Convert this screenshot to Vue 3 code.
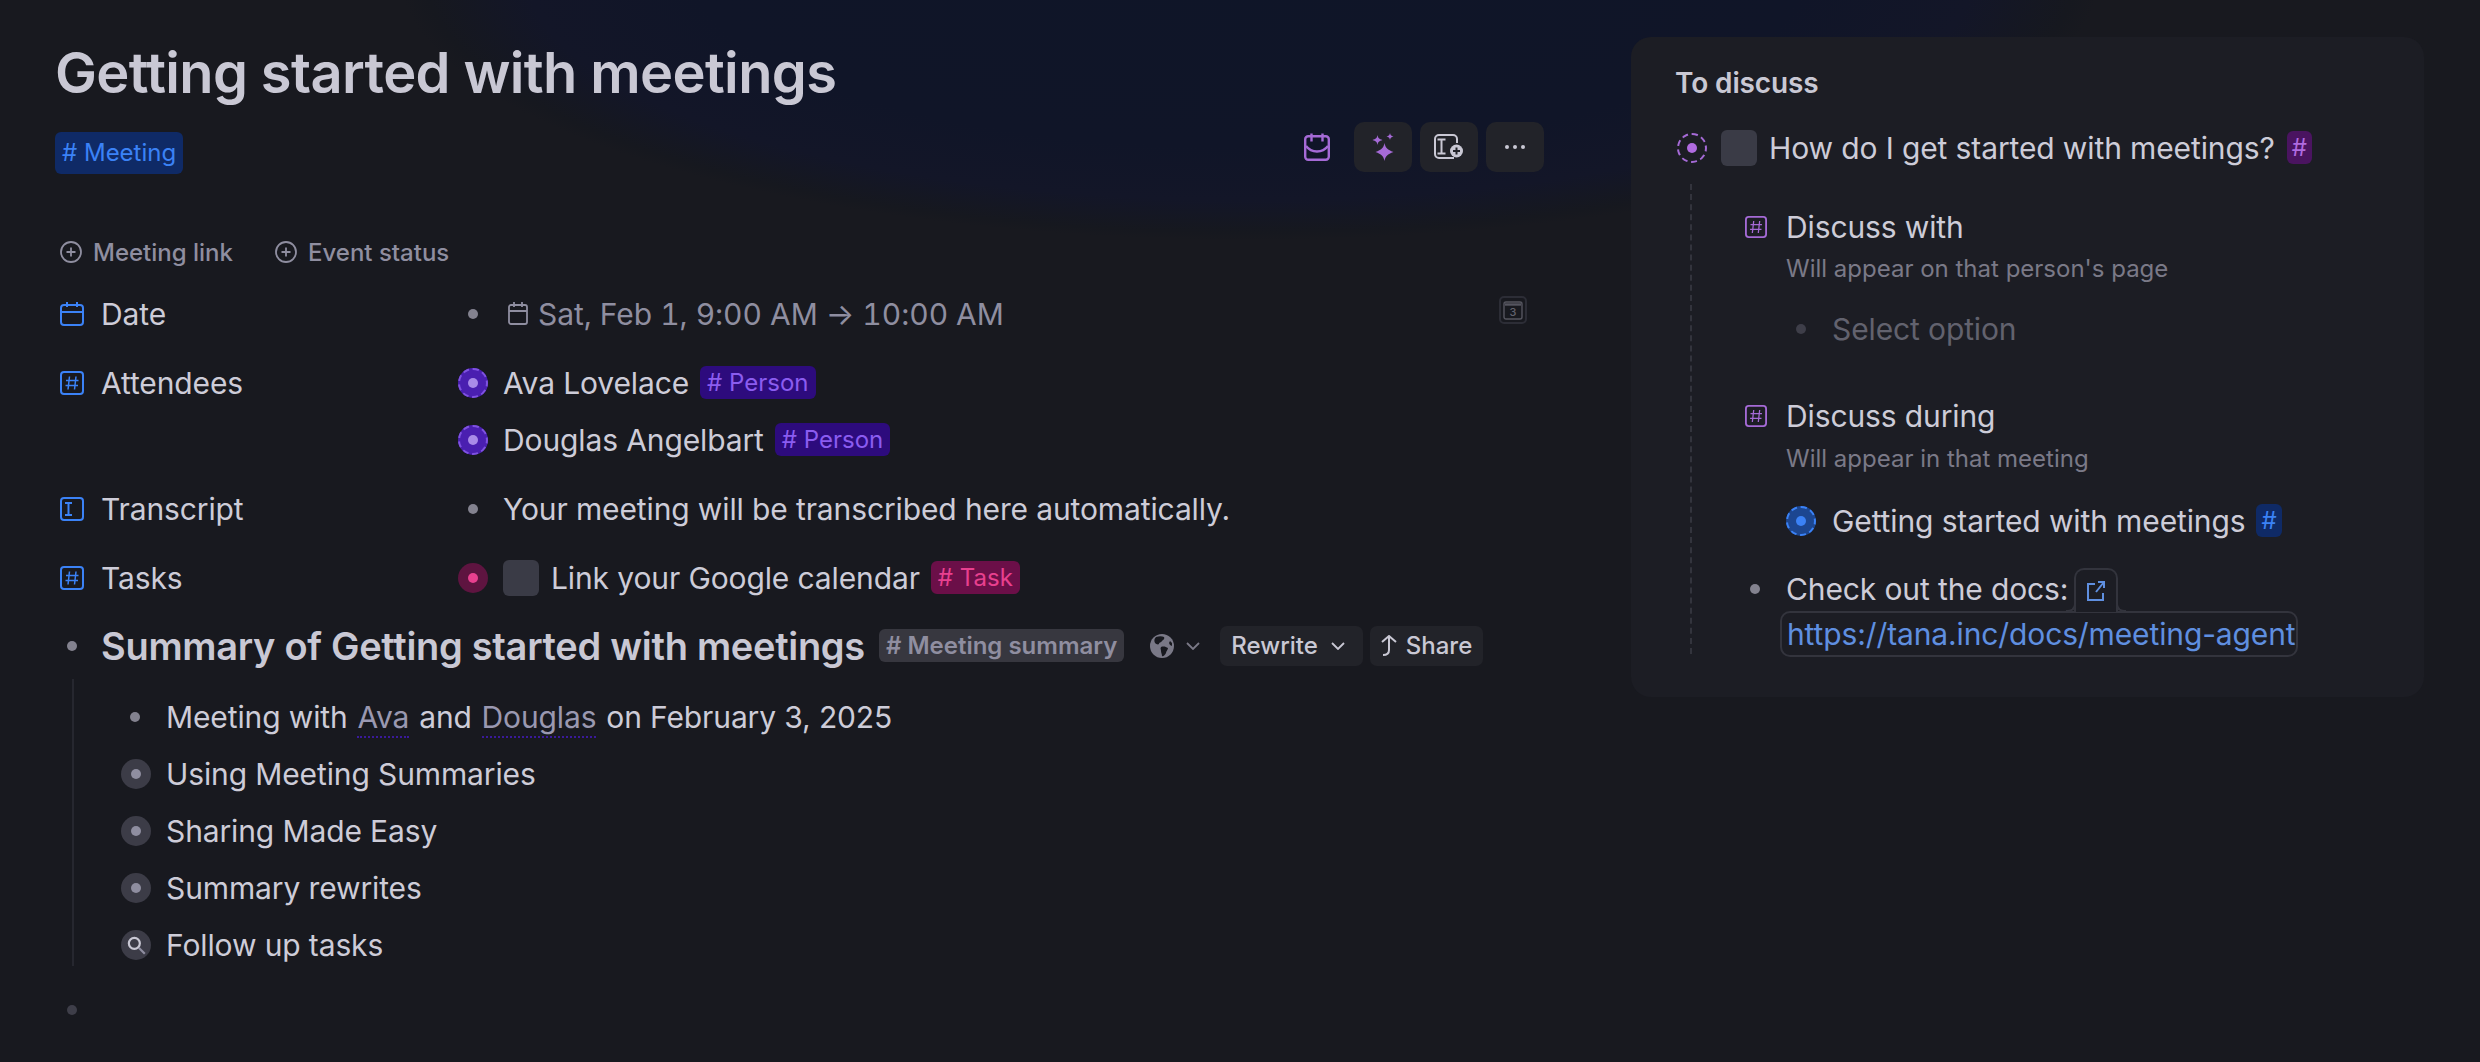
<script setup>
const summaryItems = [
  { text: 'Using Meeting Summaries', search: false },
  { text: 'Sharing Made Easy', search: false },
  { text: 'Summary rewrites', search: false },
  { text: 'Follow up tasks', search: true },
]
</script>

<template>
  <div class="page">
    <div class="glow"></div>

    <main class="main">
      <h1 class="title">Getting started with meetings</h1>

      <div class="tagbar">
        <span class="tag tag-blue tag-meeting"># Meeting</span>
        <div class="actions">
          <svg class="cal-face" viewBox="0 0 26 28" fill="none" stroke="#a56ad6" stroke-width="2.4">
            <rect x="1.2" y="3.2" width="23.6" height="23.6" rx="3" />
            <path d="M7.5 .5v8M18.5 .5v8M2 13c3 4 7 5.500 11 5.500s8-1.500 11-5.500" />
          </svg>
          <button class="act">
            <svg width="22" height="28" viewBox="0 0 22 28" fill="#a56ad6">
              <path d="M12.500 10c1 5 3 6.800 9 9-6 2.200-8 4-9 9-1-5-3-6.800-9-9 6-2.200 8-4 9-9z" />
              <path d="M5.500 2c.5 3 1.700 4 5 5-3.300 1-4.500 2-5 5-.5-3-1.700-4-5-5 3.300-1 4.500-2 5-5z" />
              <path d="M18 0c.3 2 1.100 2.700 3.500 3.500-2.400.8-3.200 1.500-3.500 3.500-.3-2-1.100-2.700-3.500-3.500 2.400-.8 3.200-1.500 3.500-3.500z" />
            </svg>
          </button>
          <button class="act">
            <svg width="30" height="26" viewBox="0 0 30 26" fill="none" stroke="#c9c8d4" stroke-width="2">
              <path d="M20 24H5a4 4 0 0 1-4-4V5a4 4 0 0 1 4-4h14a4 4 0 0 1 4 4v4" />
              <path d="M3.500 5.500h8M3.500 19.500h8M7.500 5.500v14" />
              <circle cx="22.500" cy="17" r="6.500" fill="#c9c8d4" stroke="none" />
              <path d="M22.500 13.500v7M19 17h7" stroke="#222329" />
            </svg>
          </button>
          <button class="act">
            <span class="dots"><i></i><i></i><i></i></span>
          </button>
        </div>
      </div>

      <div class="addrow">
        <span class="add">
          <svg width="22" height="22" viewBox="0 0 22 22" fill="none" stroke="#8f8ea0" stroke-width="1.800"><circle cx="11" cy="11" r="10" /><path d="M11 6.500v9M6.500 11h9" /></svg>
          Meeting link
        </span>
        <span class="add">
          <svg width="22" height="22" viewBox="0 0 22 22" fill="none" stroke="#8f8ea0" stroke-width="1.800"><circle cx="11" cy="11" r="10" /><path d="M11 6.500v9M6.500 11h9" /></svg>
          Event status
        </span>
      </div>

      <div class="fields">
        <div class="field">
          <div class="label">
            <svg class="ficon" viewBox="0 0 24 24" fill="none" stroke="#3b82f6" stroke-width="2"><rect x="1" y="3" width="22" height="20" rx="3" /><path d="M1 10h22M7 0v5M17 0v5" /></svg>
            <span>Date</span>
          </div>
          <div class="values">
            <div class="line muted">
              <span class="bullet-slot"><i class="dot"></i></span>
              <svg class="cal-small" viewBox="0 0 20 24" fill="none" stroke="#8f8ea0" stroke-width="1.800"><rect x="1" y="3" width="18" height="19" rx="2" /><path d="M1 9h18M6 0v5M14 0v5" /></svg>
              <span class="when">Sat, Feb 1, 9:00 AM → 10:00 AM</span>
              <span class="today">
                <svg width="20" height="20" viewBox="0 0 20 20" fill="none" stroke="#55555f" stroke-width="1.400"><rect x="1" y="2" width="18" height="17" rx="2" /><path d="M2 4.500h16" stroke-width="2.400" /></svg>
                <b>3</b>
              </span>
            </div>
          </div>
        </div>

        <div class="field">
          <div class="label">
            <svg class="ficon" viewBox="0 0 24 24" fill="none" stroke="#3b82f6" stroke-width="2"><rect x="1" y="1" width="22" height="22" rx="3" /><path d="M9.500 5.500 8 18.500M16 5.500l-1.500 13M6 9.500h12.500M5.500 14.500H18" stroke-width="1.500" /></svg>
            <span>Attendees</span>
          </div>
          <div class="values">
            <div class="line">
              <span class="bullet-slot"><i class="avatar a-violet"></i></span>
              <span>Ava Lovelace</span>
              <span class="tag tag-violet"># Person</span>
            </div>
            <div class="line">
              <span class="bullet-slot"><i class="avatar a-violet"></i></span>
              <span>Douglas Angelbart</span>
              <span class="tag tag-violet"># Person</span>
            </div>
          </div>
        </div>

        <div class="field">
          <div class="label">
            <svg class="ficon" viewBox="0 0 24 24" fill="none" stroke="#3b82f6" stroke-width="2"><rect x="1" y="1" width="22" height="22" rx="3" /><path d="M5 6h7M5 18h7M8.500 6v12" /></svg>
            <span>Transcript</span>
          </div>
          <div class="values">
            <div class="line">
              <span class="bullet-slot"><i class="dot"></i></span>
              <span>Your meeting will be transcribed here automatically.</span>
            </div>
          </div>
        </div>

        <div class="field">
          <div class="label">
            <svg class="ficon" viewBox="0 0 24 24" fill="none" stroke="#3b82f6" stroke-width="2"><rect x="1" y="1" width="22" height="22" rx="3" /><path d="M9.500 5.500 8 18.500M16 5.500l-1.500 13M6 9.500h12.500M5.500 14.500H18" stroke-width="1.500" /></svg>
            <span>Tasks</span>
          </div>
          <div class="values">
            <div class="line">
              <span class="bullet-slot"><i class="avatar a-pink"></i></span>
              <i class="check"></i>
              <span>Link your Google calendar</span>
              <span class="tag tag-pink"># Task</span>
            </div>
          </div>
        </div>
      </div>

      <div class="summary-head">
        <span class="outer-slot"><i class="dot"></i></span>
        <strong class="summary-title">Summary of Getting started with meetings</strong>
        <span class="tag tag-gray"># Meeting summary</span>
        <svg class="globe" viewBox="0 0 24 24">
          <circle cx="12" cy="12" r="12" fill="#7a7987" />
          <path d="M6 3c3-1 6-1 8 0 1 2-1 3-2 4-1 2-3 1-3 3-1 1-3 0-4-1C4 7 4 5 6 3zM11 13c3-1 5 0 7 1 0 2-2 3-2 5-1 2-3 4-4 3 0-2-1-3-1-5s-1-2 0-4zM20 7l2 2v3l-2-1-1-2z" fill="#18191f" />
        </svg>
        <svg class="chev globe-chev" viewBox="0 0 14 8" fill="none" stroke="#7a7987" stroke-width="1.800"><path d="M1 1l6 6 6-6" /></svg>
        <button class="pill rewrite">
          Rewrite
          <svg class="chev" viewBox="0 0 14 8" fill="none" stroke="#c9c8d4" stroke-width="1.800"><path d="M1 1l6 6 6-6" /></svg>
        </button>
        <button class="pill share">
          <svg width="16" height="22" viewBox="0 0 16 22" fill="none" stroke="#c9c8d4" stroke-width="2"><path d="M1 7l7-6 7 6M8 1v14c0 3-2 5-6 5" /></svg>
          Share
        </button>
      </div>

      <div class="summary-body">
        <div class="sline">
          <span class="sslot"><i class="dot"></i></span>
          <span>Meeting with <a class="mention">Ava</a> and <a class="mention">Douglas</a> on February 3, 2025</span>
        </div>
        <div v-for="item in summaryItems" :key="item.text" class="sline">
          <span class="sslot">
            <i class="avatar a-gray">
              <svg v-if="item.search" width="22" height="22" viewBox="0 0 20 20" fill="none" stroke="#c9c8d4" stroke-width="2"><circle cx="8.500" cy="8.500" r="5" /><path d="M12.500 12.500 18 18" stroke="#8f8ea0" /></svg>
            </i>
          </span>
          <span>{{ item.text }}</span>
        </div>
      </div>

      <div class="empty-row"><span class="outer-slot"><i class="dot dot-dim"></i></span></div>
    </main>

    <aside class="panel">
      <h2 class="panel-title">To discuss</h2>
      <div class="q-row">
        <i class="avatar a-ring"></i>
        <i class="check"></i>
        <span>How do I get started with meetings?</span>
        <span class="tag tag-plum">#</span>
      </div>
      <div class="q-body">
        <div class="p-field">
          <div class="p-head">
            <svg class="picon" viewBox="0 0 24 24" fill="none" stroke="#a56ad6" stroke-width="2"><rect x="1" y="1" width="22" height="22" rx="3" /><path d="M9.500 5.500 8 18.500M16 5.500l-1.500 13M6 9.500h12.500M5.500 14.500H18" stroke-width="1.400" /></svg>
            <span>Discuss with</span>
          </div>
          <p class="hint">Will appear on that person's page</p>
          <div class="p-val placeholder"><span class="pslot"><i class="dot dot-dim"></i></span><span>Select option</span></div>
        </div>
        <div class="p-field second">
          <div class="p-head">
            <svg class="picon" viewBox="0 0 24 24" fill="none" stroke="#a56ad6" stroke-width="2"><rect x="1" y="1" width="22" height="22" rx="3" /><path d="M9.500 5.500 8 18.500M16 5.500l-1.500 13M6 9.500h12.500M5.500 14.500H18" stroke-width="1.400" /></svg>
            <span>Discuss during</span>
          </div>
          <p class="hint">Will appear in that meeting</p>
          <div class="p-val during"><span class="pslot"><i class="avatar a-blue"></i></span><span>Getting started with meetings</span><span class="tag tag-blue tag-hash">#</span></div>
        </div>
        <div class="docs">
          <div class="docs-top">
            <span class="docs-dot"><i class="dot"></i></span>
            <span>Check out the docs:</span>
            <span class="ext">
              <svg width="20" height="22" viewBox="0 0 20 22" fill="none" stroke="#5f8fe0" stroke-width="2"><path d="M9 4H2v16h15v-7M10 12 18 2M12 2h6v6" /></svg>
            </span>
          </div>
          <div class="url">https://tana.inc/docs/meeting-agent</div>
        </div>
      </div>
    </aside>
  </div>
</template>

<style>
html, body { margin: 0; background: #18191f; }
</style>

<style scoped>
.page {
  position: relative;
  width: 2480px;
  height: 1062px;
  overflow: hidden;
  display: flex;
  background: #18191f;
  color: #cdccd8;
  font-family: Inter, "Noto Sans", sans-serif;
  font-size: 30px;
  letter-spacing: -0.12px;
}
.glow {
  position: absolute;
  left: 400px;
  top: -290px;
  width: 1700px;
  height: 530px;
  border-radius: 50%;
  background: radial-gradient(closest-side, #0f1528 0%, #101528 65%, #131628 85%, #16181f 97%, #18191f 100%);
}
.main {
  position: relative;
  width: 1544px;
  padding-left: 56px;
  box-sizing: content-box;
  flex: none;
}
.title {
  margin: 0 0 0 -1px;
  padding-top: 37px;
  height: 72px;
  line-height: 72px;
  font-size: 56px;
  font-weight: 600;
  letter-spacing: -0.63px;
  color: #c9c8d4;
}
.tagbar {
  margin-top: 13px;
  height: 50px;
  display: flex;
  align-items: center;
  justify-content: space-between;
  width: 1488px;
}
.tag {
  display: inline-flex;
  align-items: center;
  height: 33px;
  padding: 0 7px;
  border-radius: 6px;
  font-size: 24px;
  line-height: 33px;
  letter-spacing: 0;
  white-space: nowrap;
}
.tag-meeting { height: 42px; margin-top: 11px; margin-left: -1px; }
.tag-blue { background: #0f2a66; color: #3b82f6; }
.tag-violet { background: #2d0b7d; color: #8b5cf0; margin-left: 11px; }
.tag-pink { background: #6b0f48; color: #e8408f; margin-left: 11px; }
.tag-gray { background: #37373f; color: #8f8ea0; font-weight: 600; margin-left: 14px; padding: 0 7px; }
.tag-plum { background: #4a1460; color: #b06be0; margin-left: 12px; padding: 0 5px; }
.tag-hash { padding: 0 5px; margin-left: 11px; }
.actions { display: flex; align-items: center; gap: 8px; }
.cal-face { width: 26px; height: 28px; margin-right: 16px; }
.act {
  width: 58px;
  height: 50px;
  padding: 0;
  border: 0;
  border-radius: 10px;
  background: #222329;
  display: flex;
  align-items: center;
  justify-content: center;
}
.dots { display: flex; gap: 4px; }
.dots i { width: 4px; height: 4px; border-radius: 50%; background: #c9c8d4; }
.addrow {
  margin-top: 62px;
  height: 36px;
  display: flex;
  align-items: center;
  gap: 42px;
  padding-left: 4px;
  color: #8f8ea0;
  font-size: 24px;
  font-weight: 500;
  letter-spacing: 0;
}
.add { display: flex; align-items: center; gap: 11px; }
.fields { margin-top: 15px; display: flex; flex-direction: column; gap: 12px; }
.field { display: flex; }
.label {
  width: 398px;
  height: 57px;
  flex: none;
  display: flex;
  align-items: center;
  gap: 17px;
  padding-left: 4px;
  box-sizing: content-box;
}
.ficon { width: 24px; height: 24px; flex: none; }
.values { display: flex; flex-direction: column; flex: 1; }
.line { height: 57px; display: flex; align-items: center; white-space: nowrap; position: relative; }
.muted { color: #8f8ea0; }
.when { font-variant-numeric: tabular-nums; letter-spacing: -0.03px; }
.bullet-slot { width: 45px; display: flex; justify-content: center; padding-right: 15px; box-sizing: border-box; flex: none; }
.dot { display: block; width: 10px; height: 10px; border-radius: 50%; background: #83828f; }
.dot-dim { background: #3e3e49; }
.avatar { display: flex; align-items: center; justify-content: center; position: relative; width: 30px; height: 30px; border-radius: 50%; flex: none; }
.avatar::after { content: ""; width: 10px; height: 10px; border-radius: 50%; background: currentColor; }
.a-violet { background: #4a1fb0; color: #a98be8; outline: 2px dashed #7f52e0; outline-offset: -2px; }
.a-pink { background: #5e1440; color: #e8408f; }
.a-gray { background: #3c3c47; color: #8f8ea0; }
.a-gray:has(svg)::after { display: none; }
.a-ring { border: 2px dashed #a56ad6; box-sizing: border-box; color: #b06be0; }
.a-blue { background: #1c4690; color: #3b82f6; outline: 2px dashed #3b82f6; outline-offset: -2px; }
.check { display: block; width: 36px; height: 36px; border-radius: 6px; background: #3a3b46; flex: none; margin-right: 12px; }
.cal-small { width: 20px; height: 24px; margin: 0 10px 0 5px; flex: none; }
.today {
  position: absolute;
  left: 1041px;
  top: 11px;
  width: 28px;
  height: 28px;
  border: 2px solid #2c2d36;
  border-radius: 5px;
  box-sizing: border-box;
  display: flex;
  align-items: center;
  justify-content: center;
}
.today svg { position: absolute; left: 2px; top: 2px; }
.today b { font-size: 11px; font-weight: 500; color: #62626e; position: relative; top: 2px; }
.summary-head { margin-top: 11px; height: 57px; display: flex; align-items: center; white-space: nowrap; }
.outer-slot { width: 46px; margin-left: -1px; padding-left: 12px; box-sizing: border-box; flex: none; display: flex; }
.summary-title { font-size: 38px; font-weight: 600; color: #c9c8d4; letter-spacing: -0.3px; }
.globe { width: 24px; height: 24px; margin-left: 26px; flex: none; }
.globe-chev { margin-left: 12px; }
.chev { width: 14px; height: 8px; flex: none; }
.pill {
  height: 40px;
  border: 0;
  padding: 0 11px;
  border-radius: 7px;
  background: #222329;
  color: #c9c8d4;
  font: 500 24px Inter, sans-serif;
  display: flex;
  align-items: center;
}
.rewrite { margin-left: 20px; gap: 13px; padding-right: 18px; }
.share { margin-left: 7px; gap: 9px; }
.summary-body {
  margin: 5px 0 6px 16px;
  padding: 9px 0 0 48px;
  height: 287px;
  box-sizing: border-box;
  border-left: 2px solid #26272f;
  display: flex;
  flex-direction: column;
}
.sline { height: 57px; flex: none; display: flex; align-items: center; white-space: nowrap; }
.sslot { width: 45px; margin-left: -1px; display: flex; justify-content: flex-start; flex: none; }
.sslot .dot { margin-left: 9px; }
.mention { color: #9a98b0; border-bottom: 2px dotted #3a1a9a; padding-bottom: 1px; margin: 0 1.500px; }
.empty-row { margin-top: 15px; height: 57px; display: flex; align-items: center; }
.panel {
  position: relative;
  margin: 37px 0 0 31px;
  width: 793px;
  height: 660px;
  padding: 28px 44px 0;
  box-sizing: border-box;
  border-radius: 20px;
  background: #1c1d24;
  flex: none;
}
.panel-title { margin: 0; height: 36px; line-height: 36px; font-size: 28px; font-weight: 600; color: #c9c8d4; }
.q-row { margin-top: 18px; height: 57px; display: flex; align-items: center; white-space: nowrap; margin-left: 2px; }
.q-row .check { margin: 0 12px 0 14px; }
.q-body {
  margin-left: 15px;
  margin-top: 8px;
  padding-left: 53px;
  height: 470px;
  border-left: 2px dashed #33343d;
  display: flex;
  flex-direction: column;
}
.p-field { padding-top: 20px; }
.second { padding-top: 36px; }
.p-head { display: flex; align-items: center; gap: 19px; height: 45px; margin-left: 0; }
.picon { width: 22px; height: 22px; flex: none; }
.hint { margin: 5px 0 0 41px; height: 30px; line-height: 30px; font-size: 24px; color: #7a7987; letter-spacing: 0; }
.p-val { margin: 16px 0 0 41px; height: 57px; display: flex; align-items: center; white-space: nowrap; }
.during { margin-top: 18px; }
.second .hint { margin-top: 6px; }
.pslot { width: 46px; display: flex; flex: none; box-sizing: border-box; }
.placeholder { color: #62626e; }
.placeholder .pslot { padding-left: 10px; }
.docs { margin-top: 18px; position: relative; }
.docs-top { height: 44px; display: flex; align-items: center; white-space: nowrap; padding-left: 5px; }
.docs-dot { width: 36px; flex: none; }
.ext {
  position: relative;
  z-index: 1;
  margin-left: 6px;
  width: 44px;
  height: 44px;
  box-sizing: border-box;
  border: 2px solid #33343d;
  border-bottom: 0;
  border-radius: 10px 10px 0 0;
  background: #1c1d24;
  margin-bottom: -2px;
  display: flex;
  align-items: center;
  justify-content: center;
}
.ext::before,
.ext::after {
  content: "";
  position: absolute;
  bottom: 0;
  width: 10px;
  height: 10px;
  box-sizing: border-box;
  background: #1c1d24;
  border-bottom: 2px solid #33343d;
}
.ext::before {
  left: -10px;
  border-right: 2px solid #33343d;
  border-bottom-right-radius: 8px;
}
.ext::after {
  right: -10px;
  border-left: 2px solid #33343d;
  border-bottom-left-radius: 8px;
}
.url {
  margin-top: 0;
  margin-left: 35px;
  width: 518px;
  height: 46px;
  line-height: 42px;
  box-sizing: border-box;
  border: 2px solid #33343d;
  border-radius: 10px;
  padding-left: 5px;
  color: #5f8fe0;
  white-space: nowrap;
}
button { cursor: default; }
</style>
